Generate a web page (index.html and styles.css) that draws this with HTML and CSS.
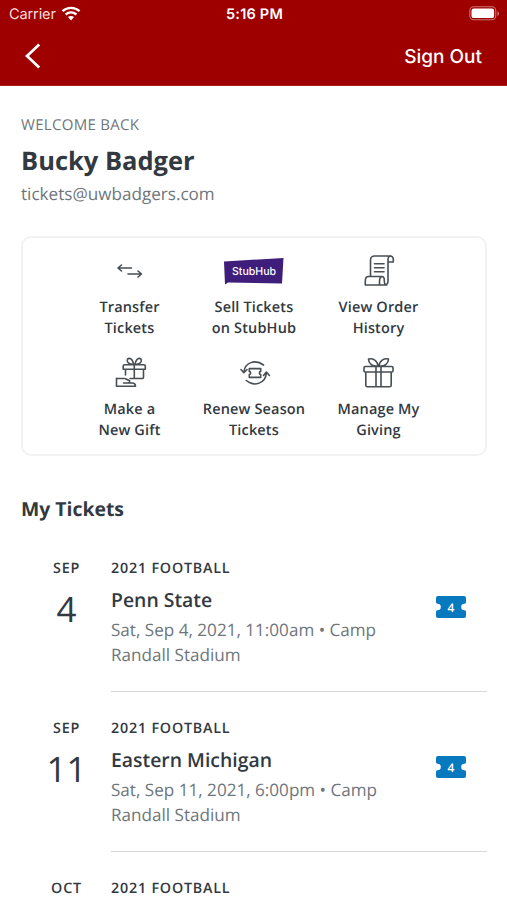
FILE: index.html
```html
<!DOCTYPE html>
<html lang="en">
<head>
<meta charset="utf-8">
<title>My Tickets</title>
<link rel="stylesheet" href="styles.css">
</head>
<body>
<header class="top">
  <div class="status">
    <div class="carrier"><span>Carrier</span>
      <svg width="20" height="15" viewBox="0 0 20 15"><g fill="none" stroke="#fff" stroke-width="2.4"><path d="M1.5 5.2C6.4.7 13.6.7 18.5 5.2"/><path d="M4.600 8.500C7.800 5.700 12.200 5.700 15.400 8.500"/></g><path d="M6.900 11.100c1.900-1.600 4.300-1.600 6.200 0L10 14.400z" fill="#fff"/></svg>
    </div>
    <div class="clock">5:16 PM</div>
    <svg class="battery" width="31" height="15" viewBox="0 0 31 15"><rect x=".8" y=".8" width="26" height="13" rx="4" fill="none" stroke="#fff" stroke-opacity=".45" stroke-width="1.1"/><rect x="2.5" y="2.5" width="22.6" height="9.6" rx="2.2" fill="#fff"/><path d="M28.5 5.2c2 .8 2 3.800 0 4.600z" fill="#fff" fill-opacity=".5"/></svg>
  </div>
  <nav class="nav">
    <svg width="18" height="28" viewBox="0 0 18 28"><path d="M15.200 2.500 3 14l12.200 11.500" fill="none" stroke="#fff" stroke-width="2.700"/></svg>
    <span class="signout">Sign Out</span>
  </nav>
</header>
<main>
  <section class="profile">
    <div class="welcome"><span>WELCOME BACK</span></div>
    <h1><span>Bucky Badger</span></h1>
    <div class="email"><span>tickets@uwbadgers.com</span></div>
  </section>
  <section class="actions">
    <div class="action">
      <svg class="icon" width="40" height="36" viewBox="0 0 40 36"><path d="M21.500 15H8.500m3-3-3.500 3 3.500 3M18 21h13m-3-3 3.500 3-3.500 3"/></svg>
      <p>Transfer<br>Tickets</p>
    </div>
    <div class="action">
      <svg class="brand" width="62" height="36" viewBox="0 0 62 36"><path d="M1 8.500 60.500 5 59 30.500 5 29.500 2 31.500z" fill="#3f1d7a"/><text x="31" y="21.800" textLength="44" lengthAdjust="spacingAndGlyphs">StubHub</text></svg>
      <p>Sell Tickets<br>on StubHub</p>
    </div>
    <div class="action">
      <svg class="icon" width="40" height="36" viewBox="0 0 40 36"><path d="M11.500 23.500V7a4 4 0 0 1 4-4H31a3.500 3.500 0 0 1 3.300 3.500V9H29V7c0-2 .8-4 2.500-4M29 9V28.500a3.500 3.500 0 0 1-3.500 3.500M15.500 10.800h9.500M15.500 14.700h9.500M15.500 18.700h9.500M9.500 23.500H23c2.400 0 2.300 2.500 2.300 4.500s.5 4 2.500 4H6.300v-4c0-2.500 1-4.500 3.200-4.500zM23 23.500c-2 .5-2.500 2.500-2.500 5V32"/></svg>
      <p>View Order<br>History</p>
    </div>
    <div class="action">
      <svg class="icon" width="40" height="36" viewBox="0 0 40 36"><path d="M14.500 9.700h19.500q1.300 0 1.300 1.300v3.200H13.200V11q0-1.300 1.300-1.300zM15.500 14.500v5.500M33.500 14.500v8q0 1-1 1H20M24.300 10v13.500M23.600 9.200C19.300 9.500 16.800 7.500 17.300 5c.4-2 3-2.200 4.500-.2 1 1.300 1.600 2.900 1.800 4.400zm1.400 0C29.300 9.500 31.800 7.500 31.300 5c-.4-2-3-2.200-4.500-.2-1 1.300-1.600 2.900-1.800 4.400zM6.500 23.200v8.100h19c0-2-1.300-3.300-3.500-3.300h-5M6.500 23.500h8c1.500 0 2.500 1.500 4.500 1.700 1 .2 1 2.500-1 2.800h-4.500"/></svg>
      <p>Make a<br>New Gift</p>
    </div>
    <div class="action">
      <svg class="icon" width="40" height="36" viewBox="0 0 40 36"><path d="M10 16.500C11 8 21 3.500 29.500 10M7 14.500l2.800 3.200 3.200-3.200M32.300 18c-.5 10-12 14.500-20 7.500M29.500 20.500l2.900-3.500 3 3.500M15.300 13.600h11.400v2.800c-1.800.3-1.800 2.900 0 3.200v2.800H15.300v-2.800c1.800-.3 1.800-2.900 0-3.200z"/></svg>
      <p>Renew Season<br>Tickets</p>
    </div>
    <div class="action">
      <svg class="icon" width="40" height="36" viewBox="0 0 40 36"><path d="M6.200 11.500h26.600q1.200 0 1.200 1.200V16q0 1-1.200 1H6.200Q5 17 5 16v-3.300q0-1.200 1.200-1.200zM6.800 17.500v12.700q0 1.500 1.500 1.500h22.400q1.500 0 1.500-1.500V17.500M17 11.500v20M22 11.500v20M19 11C13 11.500 9.500 8.500 9.500 4c4.500-1 9 1.500 9.500 7zm1 0c6 .5 9.500-2.500 9.500-7-4.500-1-9 1.500-9.500 7z"/></svg>
      <p>Manage My<br>Giving</p>
    </div>
  </section>
  <h2><span>My Tickets</span></h2>
  <section class="events">
    <article class="event">
      <div class="date"><div class="month">SEP</div><div class="day">4</div></div>
      <div class="info">
        <div class="details"><div class="season">2021 FOOTBALL</div><h3>Penn State</h3><p>Sat, Sep 4, 2021, 11:00am • Camp<br>Randall Stadium</p></div>
        <svg class="ticket" width="30" height="22" viewBox="0 0 30 22"><path d="M2 0h26q2 0 2 2v4.500q0 1-1.500 1.200a3.300 3.300 0 0 0 0 6.600q1.500.2 1.500 1.200V20q0 2-2 2H2q-2 0-2-2v-4.500q0-1 1.500-1.200a3.300 3.300 0 0 0 0-6.600Q0 7.500 0 6.500V2q0-2 2-2z"/><text x="15" y="15.500">4</text></svg>
      </div>
    </article>
    <article class="event">
      <div class="date"><div class="month">SEP</div><div class="day">11</div></div>
      <div class="info">
        <div class="details"><div class="season">2021 FOOTBALL</div><h3>Eastern Michigan</h3><p>Sat, Sep 11, 2021, 6:00pm • Camp<br>Randall Stadium</p></div>
        <svg class="ticket" width="30" height="22" viewBox="0 0 30 22"><path d="M2 0h26q2 0 2 2v4.500q0 1-1.500 1.200a3.300 3.300 0 0 0 0 6.600q1.500.2 1.500 1.200V20q0 2-2 2H2q-2 0-2-2v-4.500q0-1 1.500-1.200a3.300 3.300 0 0 0 0-6.600Q0 7.500 0 6.500V2q0-2 2-2z"/><text x="15" y="15.500">4</text></svg>
      </div>
    </article>
    <article class="event upcoming">
      <div class="date"><div class="month">OCT</div></div>
      <div class="details"><div class="season">2021 FOOTBALL</div></div>
    </article>
  </section>
</main>
</body>
</html>
```
FILE: styles.css
```css
* { box-sizing: border-box; margin: 0; padding: 0; }
body { width: 507px; height: 900px; overflow: hidden; background: #fff; color: #32393f; font-family: "Open Sans", sans-serif; white-space: nowrap; text-rendering: geometricPrecision; }
svg { display: block; flex: none; }
.top { height: 86px; background: #9e0000; color: #fff; font-family: Inter, sans-serif; border-bottom: 1px solid #a81c1c; }
.status { display: grid; grid-template-columns: 1fr auto 1fr; align-items: center; height: 27px; padding: 0 7px 0 9px; }
.carrier { display: flex; align-items: center; gap: 5px; font-size: 14.500px; color: #ffdede; letter-spacing: -.1px; }
.carrier span, .clock { padding-top: 1px; }
.clock { font-size: 14.500px; font-weight: 600; letter-spacing: .2px; }
.battery { justify-self: end; }
.nav { display: flex; justify-content: space-between; align-items: center; height: 58px; padding: 0 25px 0 24px; }
.signout { font-size: 19px; font-weight: 500; letter-spacing: 0; }
main { padding: 28px 20px 0 21px; }
.welcome { font-size: 15px; line-height: 22px; letter-spacing: .3px; color: #6f767b; }
h1 { margin-top: 7px; font-size: 25.500px; line-height: 36px; font-weight: 700; }
.email { margin-top: 4px; font-size: 17.100px; line-height: 24px; color: #6f767b; }
.actions { display: grid; grid-template-columns: repeat(3, 124.500px); justify-content: center; row-gap: 15.500px; height: 220px; margin-top: 29px; padding-top: 15px; align-content: start; border: 2px solid #f1f2f3; border-radius: 10px; }
.action { display: flex; flex-direction: column; align-items: center; }
.action p { margin-top: 8px; height: 42px; font-size: 14.500px; line-height: 21px; font-weight: 600; text-align: center; letter-spacing: .15px; }
.icon path { fill: none; stroke: #474e54; stroke-width: 1.600; stroke-linejoin: round; stroke-linecap: round; }
.brand text { fill: #fff; font: 500 11px Inter, sans-serif; text-anchor: middle; }
h2 { margin-top: 39px; font-size: 19.400px; line-height: 28px; font-weight: 700; }
.events { margin-top: 35px; }
.event { display: flex; height: 160px; }
.upcoming { height: 22px; }
.date { width: 90px; padding-left: 1px; flex: none; text-align: center; }
.month, .season { font-size: 14.300px; line-height: 22px; font-weight: 600; letter-spacing: .8px; }
.day { margin-top: 9px; font-size: 35px; line-height: 42px; font-weight: 400; }
.info { flex: 1; display: flex; justify-content: space-between; height: 134px; padding-right: 21px; border-bottom: 1.500px solid #d6d9da; }
.details { flex: none; }
h3 { margin-top: 6px; font-size: 19.400px; line-height: 28px; font-weight: 600; }
.details p { margin-top: 5px; font-size: 17.100px; line-height: 24.500px; color: #6f767b; }
.ticket { margin-top: 38px; }
.ticket path { fill: #0879bf; }
.ticket text { fill: #fff; font: 600 12px "Open Sans", sans-serif; text-anchor: middle; }
```
